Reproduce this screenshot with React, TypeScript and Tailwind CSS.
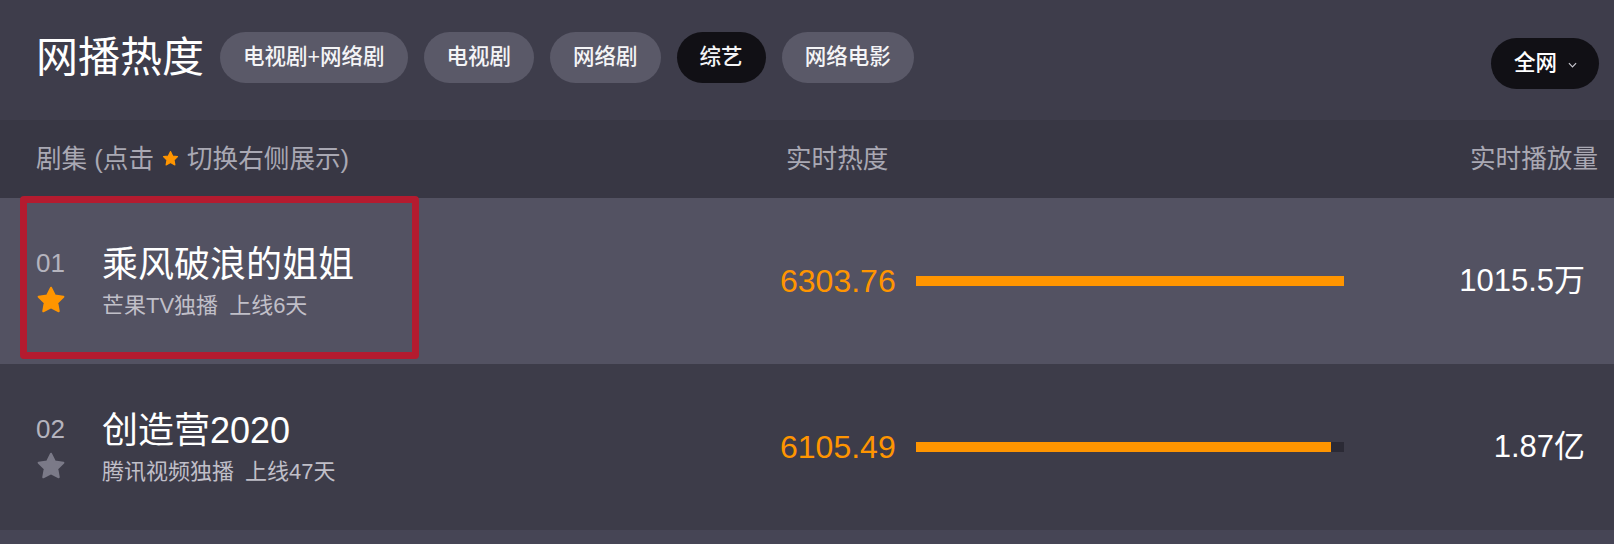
import { useState } from 'react';

type Show = {
  rank: string;
  title: string;
  platform: string;
  days: string;
  heat: number;
  plays: string;
  starred: boolean;
};

const tabs = ['电视剧+网络剧', '电视剧', '网络剧', '综艺', '网络电影'];

const shows: Show[] = [
  { rank: '01', title: '乘风破浪的姐姐', platform: '芒果TV独播', days: '上线6天', heat: 6303.76, plays: '1015.5万', starred: true },
  { rank: '02', title: '创造营2020', platform: '腾讯视频独播', days: '上线47天', heat: 6105.49, plays: '1.87亿', starred: false },
];

const maxHeat = 6303.76;

function StarIcon({ className }: { className: string }) {
  return (
    <svg viewBox="0 0 24 24" className={className} fill="currentColor" stroke="currentColor" strokeWidth="1.6" strokeLinejoin="round">
      <polygon points="12,2.2 15.1,8.4 21.9,9.4 17,14.2 18.2,21 12,17.8 5.8,21 7,14.2 2.1,9.4 8.9,8.4" />
    </svg>
  );
}

export default function App() {
  const [active, setActive] = useState('综艺');

  return (
    <div className="w-full bg-[#3e3d4b] text-white font-['Liberation_Sans','Noto_Sans_CJK_SC',sans-serif]">
      {/* header: title + category pills + scope dropdown */}
      <div className="h-[120px] flex items-start justify-between pl-[36px] pr-[15px] pt-[32px]">
        <div className="flex items-center gap-4 h-[51px]">
          <h1 className="text-[42px] leading-[51px] font-normal">网播热度</h1>
          {tabs.map(t => (
            <button
              key={t}
              onClick={() => setActive(t)}
              className={
                'h-[51px] px-[23px] rounded-full text-[21.5px] font-medium text-[#f4f4f6] ' +
                (t === active ? 'bg-[#111015]' : 'bg-[#5a5968]')
              }
            >
              {t}
            </button>
          ))}
        </div>
        <button className="mt-[6px] h-[51px] pl-[23px] pr-[22px] rounded-full bg-[#111015] flex items-center text-[21.5px] font-medium">
          全网
          <svg viewBox="0 0 10 6" className="w-[9px] h-[6px] ml-[11px] mt-[3px] text-[#c9c8d0]" fill="none" stroke="currentColor" strokeWidth="1.3">
            <path d="M1 1 L5 5 L9 1" />
          </svg>
        </button>
      </div>

      {/* column headings */}
      <div className="h-[78px] bg-[#383744] flex items-center text-[25.6px] text-[#a9a8b3]">
        <div className="w-[786px] pl-[36px] flex items-center">
          剧集 (点击
          <StarIcon className="w-[17px] h-[17px] mx-[8px] text-[#ff9500]" />
          切换右侧展示)
        </div>
        <div>实时热度</div>
        <div className="flex-1 text-right pr-[16px]">实时播放量</div>
      </div>

      {shows.map((s, i) => (
        <div key={s.rank} className={'relative h-[166px] flex items-center ' + (i === 0 ? 'bg-[#535262]' : 'bg-[#3d3c49]')}>
          <div className="w-[780px] pl-[36px] flex items-center">
            <div className="w-[66px] flex flex-col items-start">
              <span className="text-[26px] leading-[30px] text-[#b5b4be]">{s.rank}</span>
              <StarIcon className={'w-[30px] h-[30px] mt-[7px] ' + (s.starred ? 'text-[#ff9500]' : 'text-[#7b7a88]')} />
            </div>
            <div className="flex flex-col">
              <span className="text-[36px] leading-[48px]">{s.title}</span>
              <span className="text-[22px] leading-[30px] mt-[2px] text-[#c0bfc8]">
                {s.platform}
                <span className="ml-[11px]">{s.days}</span>
              </span>
            </div>
          </div>
          <div className="w-[136px] text-[32px] leading-[32px] text-[#ff9500]">{s.heat.toFixed(2)}</div>
          <div className="w-[428px] h-[10px] bg-[#2b2a35]">
            <div className="h-full bg-[#ff9500]" style={{ width: `${(s.heat / maxHeat) * 100}%` }} />
          </div>
          <div className="flex-1 text-right pr-[29px] text-[31px] leading-[32px]">{s.plays}</div>

          {/* red highlight frame drawn over the first entry */}
          {i === 0 && (
            <div className="absolute left-[20px] top-[-2px] w-[399px] h-[163px] border-[7px] border-[#b41b2f] rounded-[4px]" />
          )}
        </div>
      ))}

      <div className="h-[14px] bg-[#464555]" />
    </div>
  );
}
